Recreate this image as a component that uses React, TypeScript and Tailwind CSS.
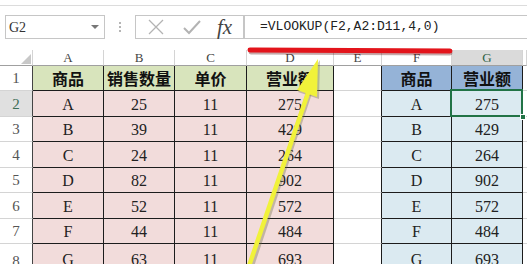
import React from 'react';

const mono = { fontFamily: '"Liberation Mono", "Noto Sans CJK SC", monospace' };
const serif = { fontFamily: '"Liberation Serif", "Noto Sans CJK SC", serif' };
const cjk = { fontFamily: '"Noto Sans CJK SC", "Noto Sans", sans-serif' };

const left = [
  ['A', 25, 11, 275],
  ['B', 39, 11, 429],
  ['C', 24, 11, 264],
  ['D', 82, 11, 902],
  ['E', 52, 11, 572],
  ['F', 44, 11, 484],
  ['G', 63, 11, 693],
];

const cols = ['A', 'B', 'C', 'D', 'E', 'F', 'G', ''];

const Toolbar = () => (
  <div className="h-[50px] flex flex-col">
    <div className="h-[5px]" />
    <div className="border-t border-[#dcdcdc] pt-[9px]">
      <div className="flex items-center h-[24px]">
        {/* name box */}
        <div className="ml-[5px] w-[100px] h-[24px] border border-[#c6c6c6] flex items-center justify-between pl-[3px] pr-[5px]">
          <span className="text-[14px] text-[#333]" style={serif}>G2</span>
          <span className="w-0 h-0 border-l-[4px] border-r-[4px] border-t-[4px] border-l-transparent border-r-transparent border-t-[#777]" />
        </div>
        {/* grip */}
        <div className="w-[30px] flex justify-center">
          <div className="flex flex-col gap-[2px]">
            <span className="w-[2px] h-[2px] bg-[#b5b5b5]" />
            <span className="w-[2px] h-[2px] bg-[#b5b5b5]" />
            <span className="w-[2px] h-[2px] bg-[#b5b5b5]" />
          </div>
        </div>
        {/* buttons */}
        <div className="w-[109px] h-[24px] border border-[#c6c6c6] flex items-center">
          <svg width="18" height="16" viewBox="0 0 18 16" className="ml-[11px]">
            <path d="M2 1 L16 15 M16 1 L2 15" stroke="#b3b3b3" strokeWidth="1.3" fill="none" />
          </svg>
          <svg width="20" height="16" viewBox="0 0 20 16" className="ml-[17px]">
            <path d="M2 9 L7 14 L18 2" stroke="#b3b3b3" strokeWidth="2" fill="none" />
          </svg>
          <span className="ml-[15px] text-[21px] italic text-[#444] leading-none" style={{ fontFamily: '"Liberation Serif", serif' }}>fx</span>
        </div>
        {/* formula */}
        <div className="flex-1 h-[24px] border border-r-0 border-[#c6c6c6] flex items-center pl-[15px]">
          <span className="text-[13px] text-[#222]" style={mono}>=VLOOKUP(F2,A2:D11,4,0)</span>
        </div>
      </div>
    </div>
  </div>
);

const ColHead = ({ label, selected }: { label: string; selected?: boolean }) => (
  <div
    className={`flex items-center justify-center text-[13px] border-r border-b border-r-[#d4d4d4] border-b-[#a0a0a0] ${
      selected ? 'bg-[#dadada] text-[#2f5f46]' : 'bg-white text-[#444]'
    }`}
    style={serif}
  >
    {label}
  </div>
);

const RowHead = ({ n, selected }: { n: number; selected?: boolean }) => (
  <div
    className={`flex items-end justify-center pb-[1px] text-[15px] border-r border-b border-r-[#444] border-b-[#d4d4d4] ${
      selected ? 'bg-[#e0e0e0] text-[#3d6e57]' : 'bg-white text-[#555]'
    }`}
    style={serif}
  >
    {n}
  </div>
);

const Cell = ({ bg, children, head }: { bg: string; children?: React.ReactNode; head?: boolean }) => (
  <div
    className={`flex items-center justify-center border-r border-b border-[#1c1c1c] ${bg} ${
      head ? 'text-[16px] font-bold text-[#111]' : 'text-[16px] text-[#222] pt-[2px]'
    }`}
    style={head ? cjk : serif}
  >
    {children}
  </div>
);

const Blank = () => (
  <div className="bg-white border-r border-b border-r-[#1c1c1c] border-b-[#d4d4d4]" />
);

const Rest = () => <div className="bg-white border-b border-[#d4d4d4]" />;

const Sheet = () => (
  <div className="grid grid-cols-[33px_71px_71px_72px_87px_48px_70px_71px_1fr] grid-rows-[16px_25px_26px_25px_26px_25px_26px_25px_30px]">
    {/* column header */}
    <div className="relative bg-white border-r border-b border-r-[#d4d4d4] border-b-[#a0a0a0]">
      <svg width="10" height="10" viewBox="0 0 10 10" className="absolute right-[1px] bottom-[1px]">
        <polygon points="10,0 10,10 0,10" fill="#c8c8c8" />
      </svg>
    </div>
    {cols.map((c, i) => (
      <ColHead key={i} label={c} selected={c === 'G'} />
    ))}

    {/* row 1 */}
    <RowHead n={1} />
    <Cell bg="bg-[#d8e4bc]" head>商品</Cell>
    <Cell bg="bg-[#d8e4bc]" head>销售数量</Cell>
    <Cell bg="bg-[#d8e4bc]" head>单价</Cell>
    <Cell bg="bg-[#d8e4bc]" head>营业额</Cell>
    <Blank />
    <Cell bg="bg-[#95b3d7]" head>商品</Cell>
    <Cell bg="bg-[#95b3d7]" head>营业额</Cell>
    <Rest />

    {left.map((r, i) => (
      <React.Fragment key={i}>
        <RowHead n={i + 2} selected={i === 0} />
        <Cell bg="bg-[#f2dcdb]">{r[0]}</Cell>
        <Cell bg="bg-[#f2dcdb]">{r[1]}</Cell>
        <Cell bg="bg-[#f2dcdb]">{r[2]}</Cell>
        <Cell bg="bg-[#f2dcdb]">{r[3]}</Cell>
        <Blank />
        <Cell bg="bg-[#dbeaf1]">{r[0]}</Cell>
        {i === 0 ? (
          <div className="relative flex items-center justify-center pt-[2px] border-r border-b border-[#1c1c1c] bg-[#dbeaf1] text-[16px] text-[#222]" style={serif}>
            {r[3]}
            <div className="absolute -left-[2px] -top-[2px] -right-[1px] -bottom-[1px] border-2 border-[#217346]" />
            <div className="absolute -right-[4px] -bottom-[4px] w-[6px] h-[6px] bg-[#217346] border border-white" />
          </div>
        ) : (
          <Cell bg="bg-[#dbeaf1]">{r[3]}</Cell>
        )}
        <Rest />
      </React.Fragment>
    ))}
  </div>
);

export default function App() {
  return (
    <div className="relative w-[527px] h-[264px] overflow-hidden bg-white">
      <Toolbar />
      <Sheet />
      {/* annotations */}
      <svg width="527" height="264" viewBox="0 0 527 264" className="absolute left-0 top-0 pointer-events-none">
        <line x1="251" y1="52" x2="450" y2="53" stroke="#5a0a0a" strokeOpacity="0.35" strokeWidth="5" strokeLinecap="round" />
        <line x1="250" y1="50" x2="450" y2="51" stroke="#e3141b" strokeWidth="5" strokeLinecap="round" />
        <line x1="251" y1="266" x2="310" y2="90" stroke="#6b6b40" strokeOpacity="0.35" strokeWidth="6" />
        <polygon points="319,59 297,91 318,98" fill="#6b6b40" fillOpacity="0.35" transform="translate(1,1)" />
        <line x1="249" y1="266" x2="309" y2="90" stroke="#f1f23a" strokeWidth="4.5" />
        <polygon points="318,59 297,90 317,97" fill="#f1f23a" />
      </svg>
    </div>
  );
}
